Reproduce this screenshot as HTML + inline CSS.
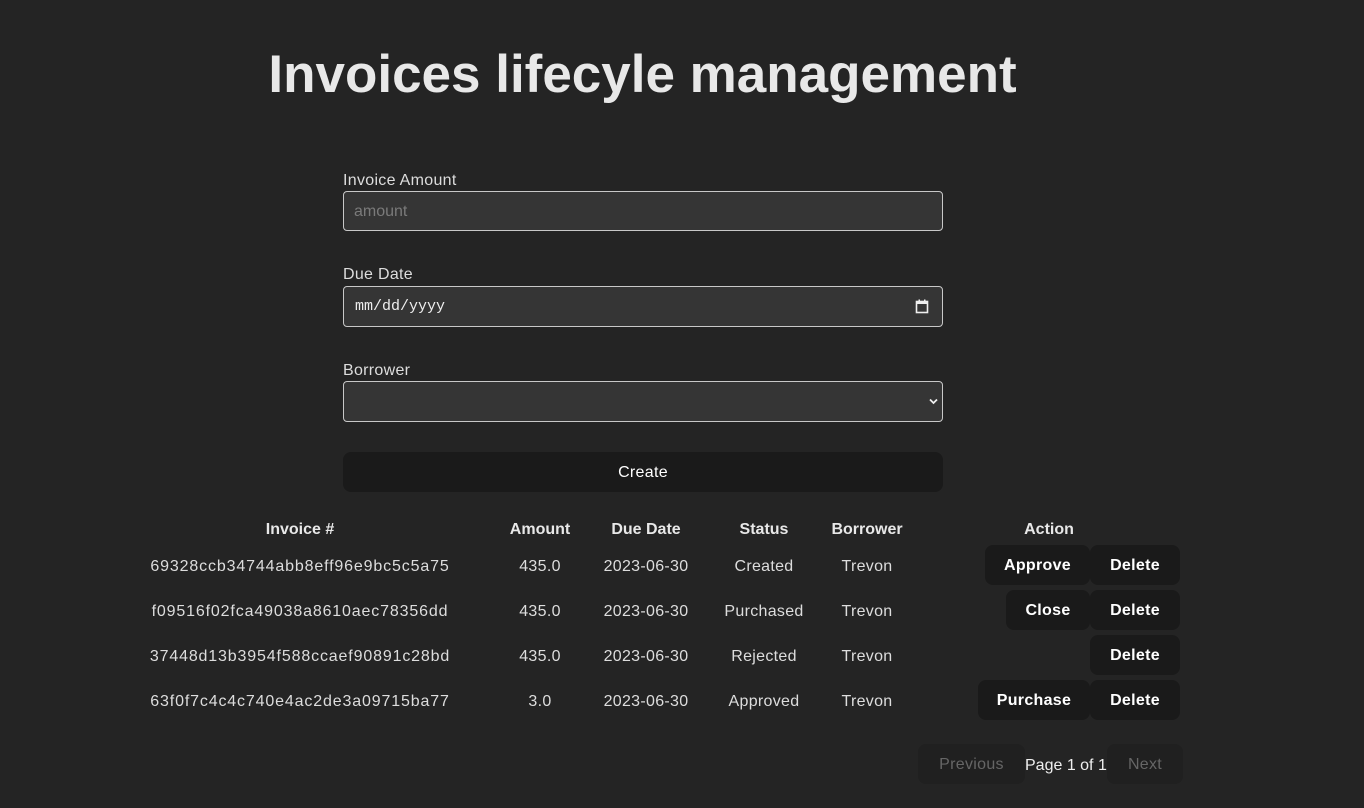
<!DOCTYPE html>
<html><head><style>
body{margin:0;width:1364px;height:808px;background:#242424;color:rgba(255,255,255,.87);font-family:"Liberation Sans",sans-serif;position:relative;overflow:hidden}
.a{position:absolute}
h1{position:absolute;left:0;width:1285px;text-align:center;top:44px;margin:0;font-size:53px;font-weight:bold;color:#e8e8e8}
label{position:absolute;left:343px;font-size:16px;color:#ddd;letter-spacing:0.3px;top:0}
.in{position:absolute;left:343px;width:598px;height:38px;background:#353535;border:1px solid #c8c8c8;border-radius:4px;box-sizing:content-box}
.btn{position:absolute;background:#1a1a1a;border-radius:8px;color:#fff;font-size:16px;font-weight:bold;text-align:center;line-height:42px;height:40px;letter-spacing:0.3px}
.c{position:absolute;text-align:center;font-size:16px;color:#ddd;transform:translateX(-50%);white-space:nowrap;letter-spacing:0.3px}
.h{font-weight:bold;color:#e8e8e8;letter-spacing:0}
.x{letter-spacing:0.85px}
</style></head><body>
<h1>Invoices lifecyle management</h1>
<label style="top:172px">Invoice Amount</label>
<div class="in" style="top:191px"><span class="a" style="left:10px;top:11px;color:#7a7a7a;font-size:16px">amount</span></div>
<label style="top:266px">Due Date</label>
<div class="in" style="top:286px;height:39px"><span class="a" style="left:11px;top:11px;font-family:'Liberation Mono',monospace;font-size:15px;color:#eee">mm/dd/yyyy</span>
<svg class="a" style="left:571px;top:12px" width="14" height="15" viewBox="0 0 14 15"><rect x="1.5" y="2.5" width="11" height="11" fill="none" stroke="#eee" stroke-width="1.6"/><rect x="1.5" y="2.5" width="11" height="2.5" fill="#eee"/><rect x="3.5" y="0.5" width="1.5" height="2.5" fill="#eee"/><rect x="9" y="0.5" width="1.5" height="2.5" fill="#eee"/></svg></div>
<label style="top:362px">Borrower</label>
<div class="in" style="top:381px;height:39px"><svg class="a" style="left:585px;top:16px" width="9" height="7" viewBox="0 0 9 7"><path d="M1 1.5L4.5 5L8 1.5" fill="none" stroke="#eee" stroke-width="1.8"/></svg></div>
<div class="btn" style="left:343px;top:452px;width:600px;font-weight:normal">Create</div>

<div class="c h" style="left:300px;top:521px">Invoice #</div>
<div class="c h" style="left:540px;top:521px">Amount</div>
<div class="c h" style="left:646px;top:521px">Due Date</div>
<div class="c h" style="left:764px;top:521px">Status</div>
<div class="c h" style="left:867px;top:521px">Borrower</div>
<div class="c h" style="left:1049px;top:521px">Action</div>

<div class="c x" style="left:300px;top:558px">69328ccb34744abb8eff96e9bc5c5a75</div>
<div class="c" style="left:540px;top:558px">435.0</div>
<div class="c" style="left:646px;top:558px">2023-06-30</div>
<div class="c" style="left:764px;top:558px">Created</div>
<div class="c" style="left:867px;top:558px">Trevon</div>
<div class="btn" style="left:985px;top:545px;width:105px">Approve</div>
<div class="btn" style="left:1090px;top:545px;width:90px">Delete</div>

<div class="c x" style="left:300px;top:603px">f09516f02fca49038a8610aec78356dd</div>
<div class="c" style="left:540px;top:603px">435.0</div>
<div class="c" style="left:646px;top:603px">2023-06-30</div>
<div class="c" style="left:764px;top:603px">Purchased</div>
<div class="c" style="left:867px;top:603px">Trevon</div>
<div class="btn" style="left:1006px;top:590px;width:84px">Close</div>
<div class="btn" style="left:1090px;top:590px;width:90px">Delete</div>

<div class="c x" style="left:300px;top:648px">37448d13b3954f588ccaef90891c28bd</div>
<div class="c" style="left:540px;top:648px">435.0</div>
<div class="c" style="left:646px;top:648px">2023-06-30</div>
<div class="c" style="left:764px;top:648px">Rejected</div>
<div class="c" style="left:867px;top:648px">Trevon</div>
<div class="btn" style="left:1090px;top:635px;width:90px">Delete</div>

<div class="c x" style="left:300px;top:693px">63f0f7c4c4c740e4ac2de3a09715ba77</div>
<div class="c" style="left:540px;top:693px">3.0</div>
<div class="c" style="left:646px;top:693px">2023-06-30</div>
<div class="c" style="left:764px;top:693px">Approved</div>
<div class="c" style="left:867px;top:693px">Trevon</div>
<div class="btn" style="left:978px;top:680px;width:112px">Purchase</div>
<div class="btn" style="left:1090px;top:680px;width:90px">Delete</div>

<div class="btn" style="left:918px;top:744px;width:107px;background:#202020;color:#666;font-weight:normal">Previous</div>
<div class="a" style="left:1025px;top:757px;font-size:16px;color:#eee">Page 1 of 1</div>
<div class="btn" style="left:1107px;top:744px;width:76px;background:#202020;color:#666;font-weight:normal">Next</div>
</body></html>
